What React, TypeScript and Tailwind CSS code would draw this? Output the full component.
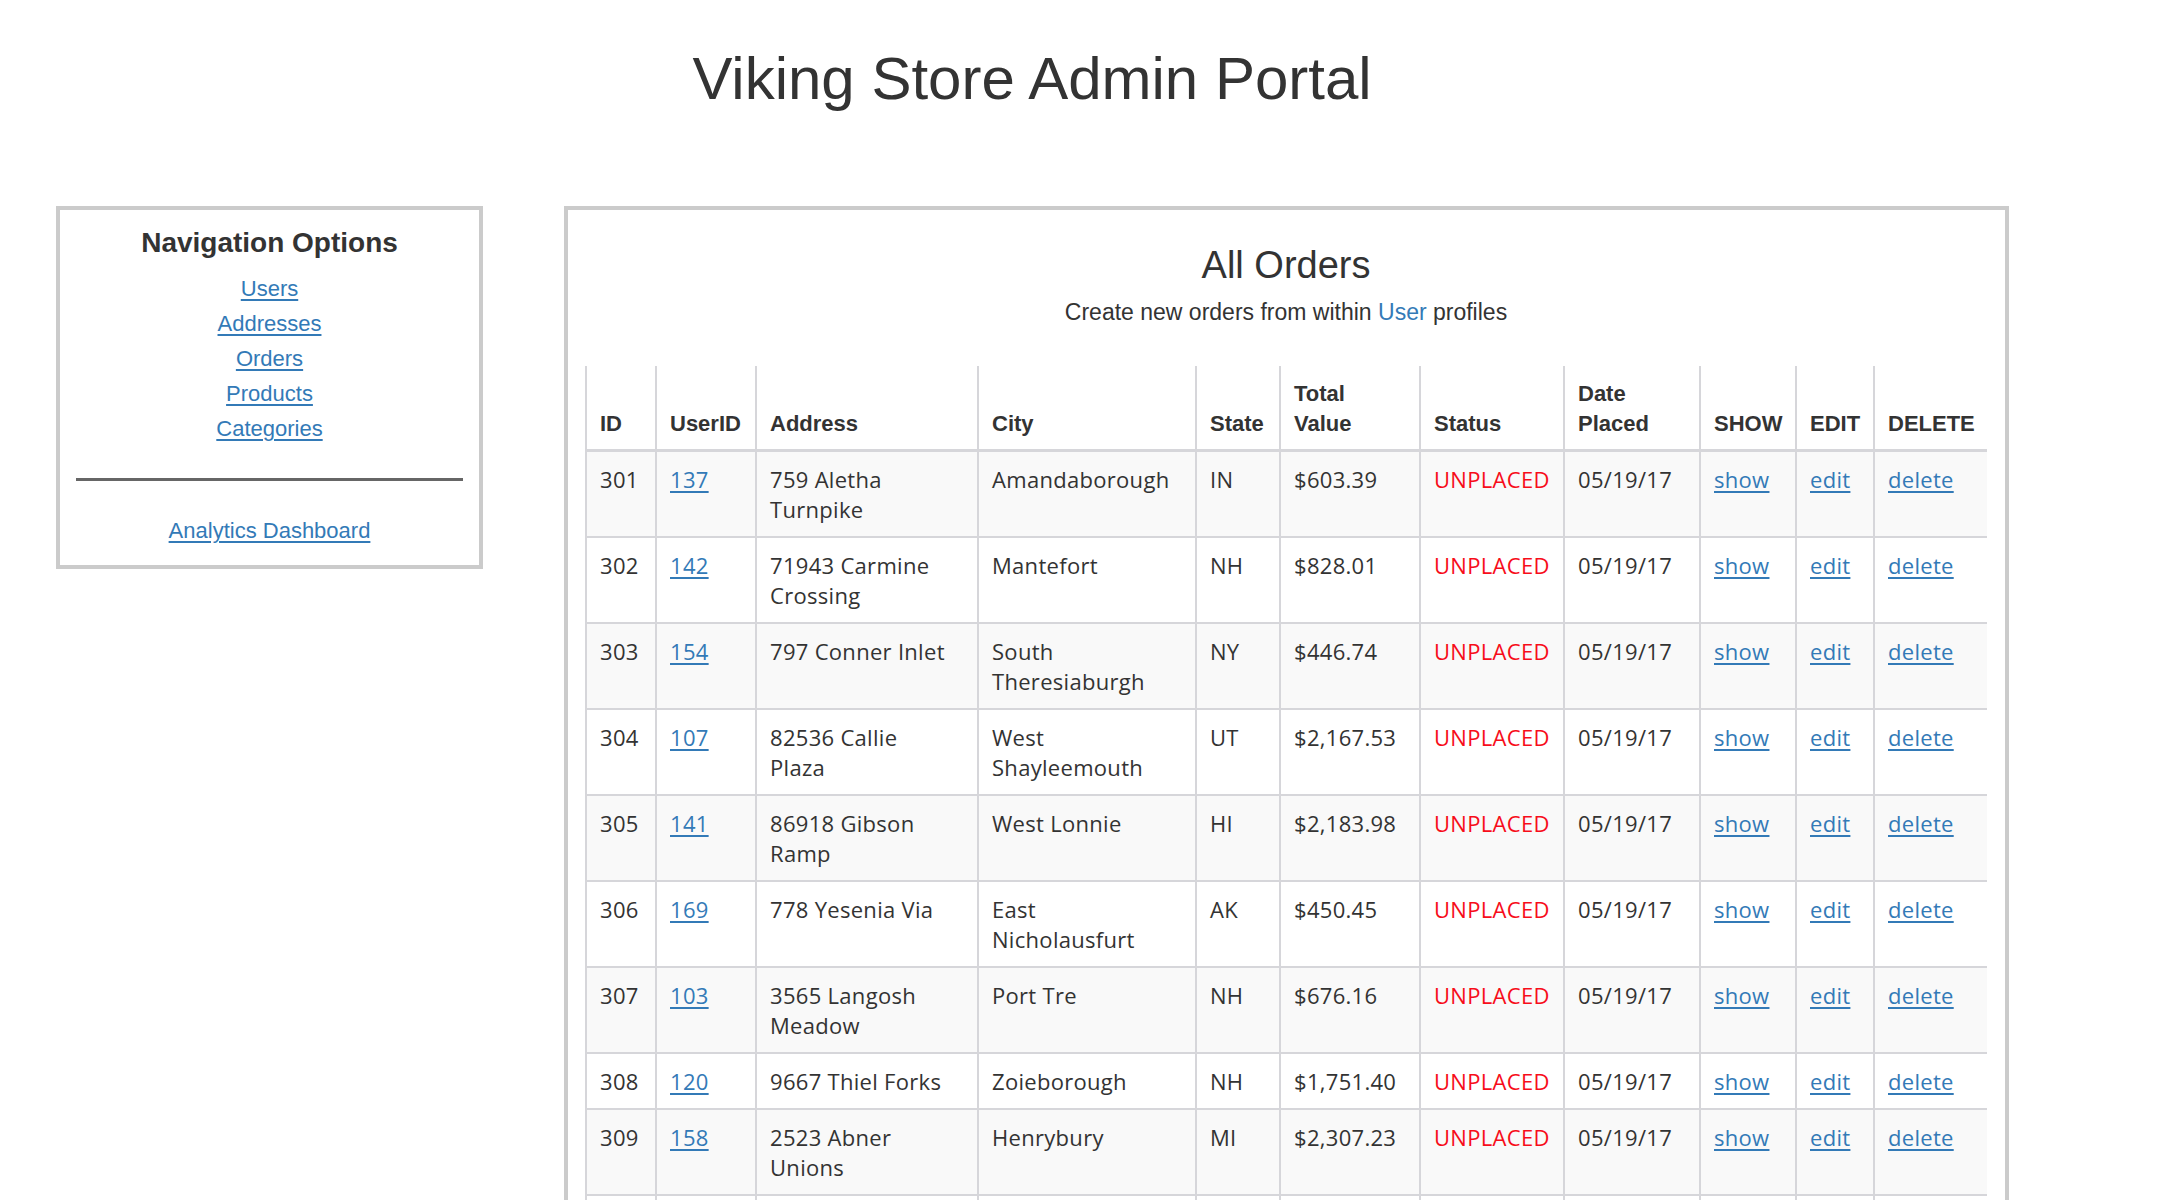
import React from 'react';

type Order = {
  id: number;
  userId: number;
  address: string[];
  city: string[];
  state: string;
  total: string;
};

const orders: Order[] = [
  { id: 301, userId: 137, address: ['759 Aletha', 'Turnpike'], city: ['Amandaborough'], state: 'IN', total: '$603.39' },
  { id: 302, userId: 142, address: ['71943 Carmine', 'Crossing'], city: ['Mantefort'], state: 'NH', total: '$828.01' },
  { id: 303, userId: 154, address: ['797 Conner Inlet'], city: ['South', 'Theresiaburgh'], state: 'NY', total: '$446.74' },
  { id: 304, userId: 107, address: ['82536 Callie', 'Plaza'], city: ['West', 'Shayleemouth'], state: 'UT', total: '$2,167.53' },
  { id: 305, userId: 141, address: ['86918 Gibson', 'Ramp'], city: ['West Lonnie'], state: 'HI', total: '$2,183.98' },
  { id: 306, userId: 169, address: ['778 Yesenia Via'], city: ['East', 'Nicholausfurt'], state: 'AK', total: '$450.45' },
  { id: 307, userId: 103, address: ['3565 Langosh', 'Meadow'], city: ['Port Tre'], state: 'NH', total: '$676.16' },
  { id: 308, userId: 120, address: ['9667 Thiel Forks'], city: ['Zoieborough'], state: 'NH', total: '$1,751.40' },
  { id: 309, userId: 158, address: ['2523 Abner', 'Unions'], city: ['Henrybury'], state: 'MI', total: '$2,307.23' },
  { id: 310, userId: 112, address: ['5412 Dach', 'Square'], city: ['Lake Ewell'], state: 'CA', total: '$912.66' },
  { id: 311, userId: 126, address: ['418 Kuhic', 'Stravenue'], city: ['Port Dino'], state: 'OR', total: '$1,204.17' },
];

const navLinks = ['Users', 'Addresses', 'Orders', 'Products', 'Categories'];

const linkCls = 'text-[#337ab7] underline decoration-2 underline-offset-[3px]';
const thCls =
  'border-l-2 border-b-[3px] border-[#d6d6da] px-[13px] pt-[13px] pb-[10px] text-left align-bottom font-bold leading-[30px]';
const tdCls = 'border-l-2 border-b-2 border-[#d6d6da] px-[13px] py-[12px] align-top leading-[30px]';

const Lines: React.FC<{ lines: string[] }> = ({ lines }) => (
  <>
    {lines.map((l, i) => (
      <React.Fragment key={i}>
        {i > 0 && <br />}
        {l}
      </React.Fragment>
    ))}
  </>
);

const App: React.FC = () => {
  return (
    <div className="min-h-screen bg-white font-['Liberation_Sans',Arial,sans-serif] text-[#333]">
      <div className="pl-[56px] pr-[150px]">
        <h1 className="pt-[46px] text-center text-[60px] leading-[66px] font-normal">
          Viking Store Admin Portal
        </h1>

        <div className="mt-[94px] flex items-start gap-[81px]">
          {/* 왼쪽 - 네비게이션 */}
          <nav className="w-[427px] shrink-0 border-4 border-[#cbcbcb] px-[16px] pt-[16px] pb-[17px] text-center">
            <h3 className="text-[28px] leading-[33px] font-semibold">Navigation Options</h3>
            <ul className="mt-[12px] text-[22px] leading-[35px]">
              {navLinks.map((name) => (
                <li key={name}>
                  <a href="#" className={linkCls}>
                    {name}
                  </a>
                </li>
              ))}
            </ul>
            <div className="mt-[32px] h-[3px] bg-[#666]" />
            <div className="mt-[32px] text-[22px] leading-[35px]">
              <a href="#" className={linkCls}>
                Analytics Dashboard
              </a>
            </div>
          </nav>

          {/* 오른쪽 - 주문 목록 */}
          <main className="flex-1 border-4 border-[#cbcbcb] pl-[17px] pr-[18px] pt-[34px] pb-[40px]">
            <h2 className="text-center text-[38px] leading-[42px] font-medium">All Orders</h2>
            <p className="mt-[10px] text-center text-[23px] leading-[32px]">
              Create new orders from within{' '}
              <a href="#" className="text-[#337ab7]">
                User
              </a>{' '}
              profiles
            </p>

            <table className="mt-[38px] w-[1401px] table-fixed text-[22px]">
              <colgroup>
                <col className="w-[70px]" />
                <col className="w-[100px]" />
                <col className="w-[222px]" />
                <col className="w-[218px]" />
                <col className="w-[84px]" />
                <col className="w-[140px]" />
                <col className="w-[144px]" />
                <col className="w-[136px]" />
                <col className="w-[96px]" />
                <col className="w-[78px]" />
                <col className="w-[113px]" />
              </colgroup>
              <thead>
                <tr>
                  <th className={thCls}>ID</th>
                  <th className={thCls}>UserID</th>
                  <th className={thCls}>Address</th>
                  <th className={thCls}>City</th>
                  <th className={thCls}>State</th>
                  <th className={thCls}>
                    Total
                    <br />
                    Value
                  </th>
                  <th className={thCls}>Status</th>
                  <th className={thCls}>
                    Date
                    <br />
                    Placed
                  </th>
                  <th className={thCls}>SHOW</th>
                  <th className={thCls}>EDIT</th>
                  <th className={thCls}>DELETE</th>
                </tr>
              </thead>
              <tbody className="font-['Open_Sans','Noto_Sans',sans-serif] tracking-[0.3px]">
                {orders.map((o, i) => (
                  <tr key={o.id} className={i % 2 === 0 ? 'bg-[#f9f9f9]' : 'bg-white'}>
                    <td className={tdCls}>{o.id}</td>
                    <td className={tdCls}>
                      <a href="#" className={linkCls}>
                        {o.userId}
                      </a>
                    </td>
                    <td className={tdCls}>
                      <Lines lines={o.address} />
                    </td>
                    <td className={tdCls}>
                      <Lines lines={o.city} />
                    </td>
                    <td className={tdCls}>{o.state}</td>
                    <td className={tdCls}>{o.total}</td>
                    <td className={`${tdCls} text-[#f70d1a]`}>UNPLACED</td>
                    <td className={tdCls}>05/19/17</td>
                    <td className={tdCls}>
                      <a href="#" className={linkCls}>
                        show
                      </a>
                    </td>
                    <td className={tdCls}>
                      <a href="#" className={linkCls}>
                        edit
                      </a>
                    </td>
                    <td className={tdCls}>
                      <a href="#" className={linkCls}>
                        delete
                      </a>
                    </td>
                  </tr>
                ))}
              </tbody>
            </table>
          </main>
        </div>
      </div>
    </div>
  );
};

export default App;
